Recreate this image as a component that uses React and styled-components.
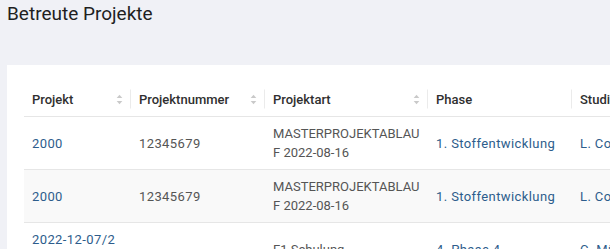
import React from 'react';
import styled, { createGlobalStyle } from 'styled-components';

const GlobalStyle = createGlobalStyle`
  body {
    margin: 0;
    background: #f0f1f6;
    font-family: Roboto, 'Liberation Sans', Arial, sans-serif;
    overflow: hidden;
  }
`;

const Page = styled.main`
  padding: 2px 0 0 7px;
`;

const Title = styled.h1`
  margin: 0;
  font-size: 19px;
  line-height: 24px;
  font-weight: 400;
  color: #1f1f1f;
`;

const Card = styled.section`
  margin-top: 39px;
  width: 820px;
  padding: 17px;
  background: #fff;
`;

const Table = styled.table`
  width: 768px;
  border-collapse: collapse;
  table-layout: fixed;
  font-size: 13px;
`;

const Head = styled.th`
  position: relative;
  height: 34px;
  padding: 0 8px;
  text-align: left;
  font-weight: 500;
  color: #2f2f2f;
  border-bottom: 1px solid #e6e6e6;

  &::after {
    content: '';
    display: ${props => (props.$last ? 'none' : 'block')};
    position: absolute;
    right: 0;
    top: 50%;
    width: 1px;
    height: 19px;
    transform: translateY(-50%);
    background: #ebebeb;
  }
`;

const HeadInner = styled.div`
  display: flex;
  align-items: center;
  justify-content: space-between;
  white-space: nowrap;
  overflow: hidden;
`;

const Row = styled.tr`
  background: ${props => (props.$striped ? '#f9f9f9' : '#fff')};
`;

const Cell = styled.td`
  padding: 7px ${props => (props.$tight ? '6px' : '8px')} 7px 8px;
  line-height: 19px;
  color: #555;
  letter-spacing: ${props => (props.$tight ? '0' : '0.4px')};
  border-bottom: 1px solid #e6e6e6;
  vertical-align: middle;
  word-break: break-all;
  white-space: ${props => (props.$nowrap ? 'nowrap' : 'normal')};
  overflow: hidden;
`;

const Link = styled.a`
  color: #2d5d8c;
  text-decoration: none;
  letter-spacing: 0.4px;
`;

const SortIcon = () => (
  <svg width="7" height="11" viewBox="0 0 7 11" aria-hidden="true">
    <path d="M3.5 0.8 L6.3 4 H0.7 Z" fill="#c9c9c9" />
    <path d="M3.5 10.2 L0.7 7 H6.3 Z" fill="#c9c9c9" />
  </svg>
);

const columns = [
  { label: 'Projekt', width: 107, sortable: true },
  { label: 'Projektnummer', width: 134, sortable: true },
  { label: 'Projektart', width: 163, sortable: true },
  { label: 'Phase', width: 144 },
  { label: 'Studienleiter', width: 220, last: true },
];

const projects = [
  {
    project: '2000',
    number: '12345679',
    type: 'MASTERPROJEKTABLAUF 2022-08-16',
    phase: '1. Stoffentwicklung',
    lead: 'L. Cooper',
  },
  {
    project: '2000',
    number: '12345679',
    type: 'MASTERPROJEKTABLAUF 2022-08-16',
    phase: '1. Stoffentwicklung',
    lead: 'L. Cooper',
  },
  {
    project: '2022-12-07/2 Neu',
    number: '',
    type: 'F1 Schulung',
    phase: '4. Phase 4',
    lead: 'C. Müller',
  },
];

const App = () => {
  return (
    <Page>
      <GlobalStyle />
      <Title>Betreute Projekte</Title>
      <Card>
        <Table>
          <colgroup>
            {columns.map(col => (
              <col key={col.label} style={{ width: col.width }} />
            ))}
          </colgroup>
          <thead>
            <tr>
              {columns.map(col => (
                <Head key={col.label} $last={col.last}>
                  <HeadInner>
                    <span>{col.label}</span>
                    {col.sortable && <SortIcon />}
                  </HeadInner>
                </Head>
              ))}
            </tr>
          </thead>
          <tbody>
            {projects.map((p, i) => (
              <Row key={i} $striped={i % 2 === 1}>
                <Cell>
                  <Link href="#">{p.project}</Link>
                </Cell>
                <Cell>{p.number}</Cell>
                <Cell $tight>{p.type}</Cell>
                <Cell>
                  <Link href="#">{p.phase}</Link>
                </Cell>
                <Cell $nowrap>
                  <Link href="#">{p.lead}</Link>
                </Cell>
              </Row>
            ))}
          </tbody>
        </Table>
      </Card>
    </Page>
  );
};

export default App;
